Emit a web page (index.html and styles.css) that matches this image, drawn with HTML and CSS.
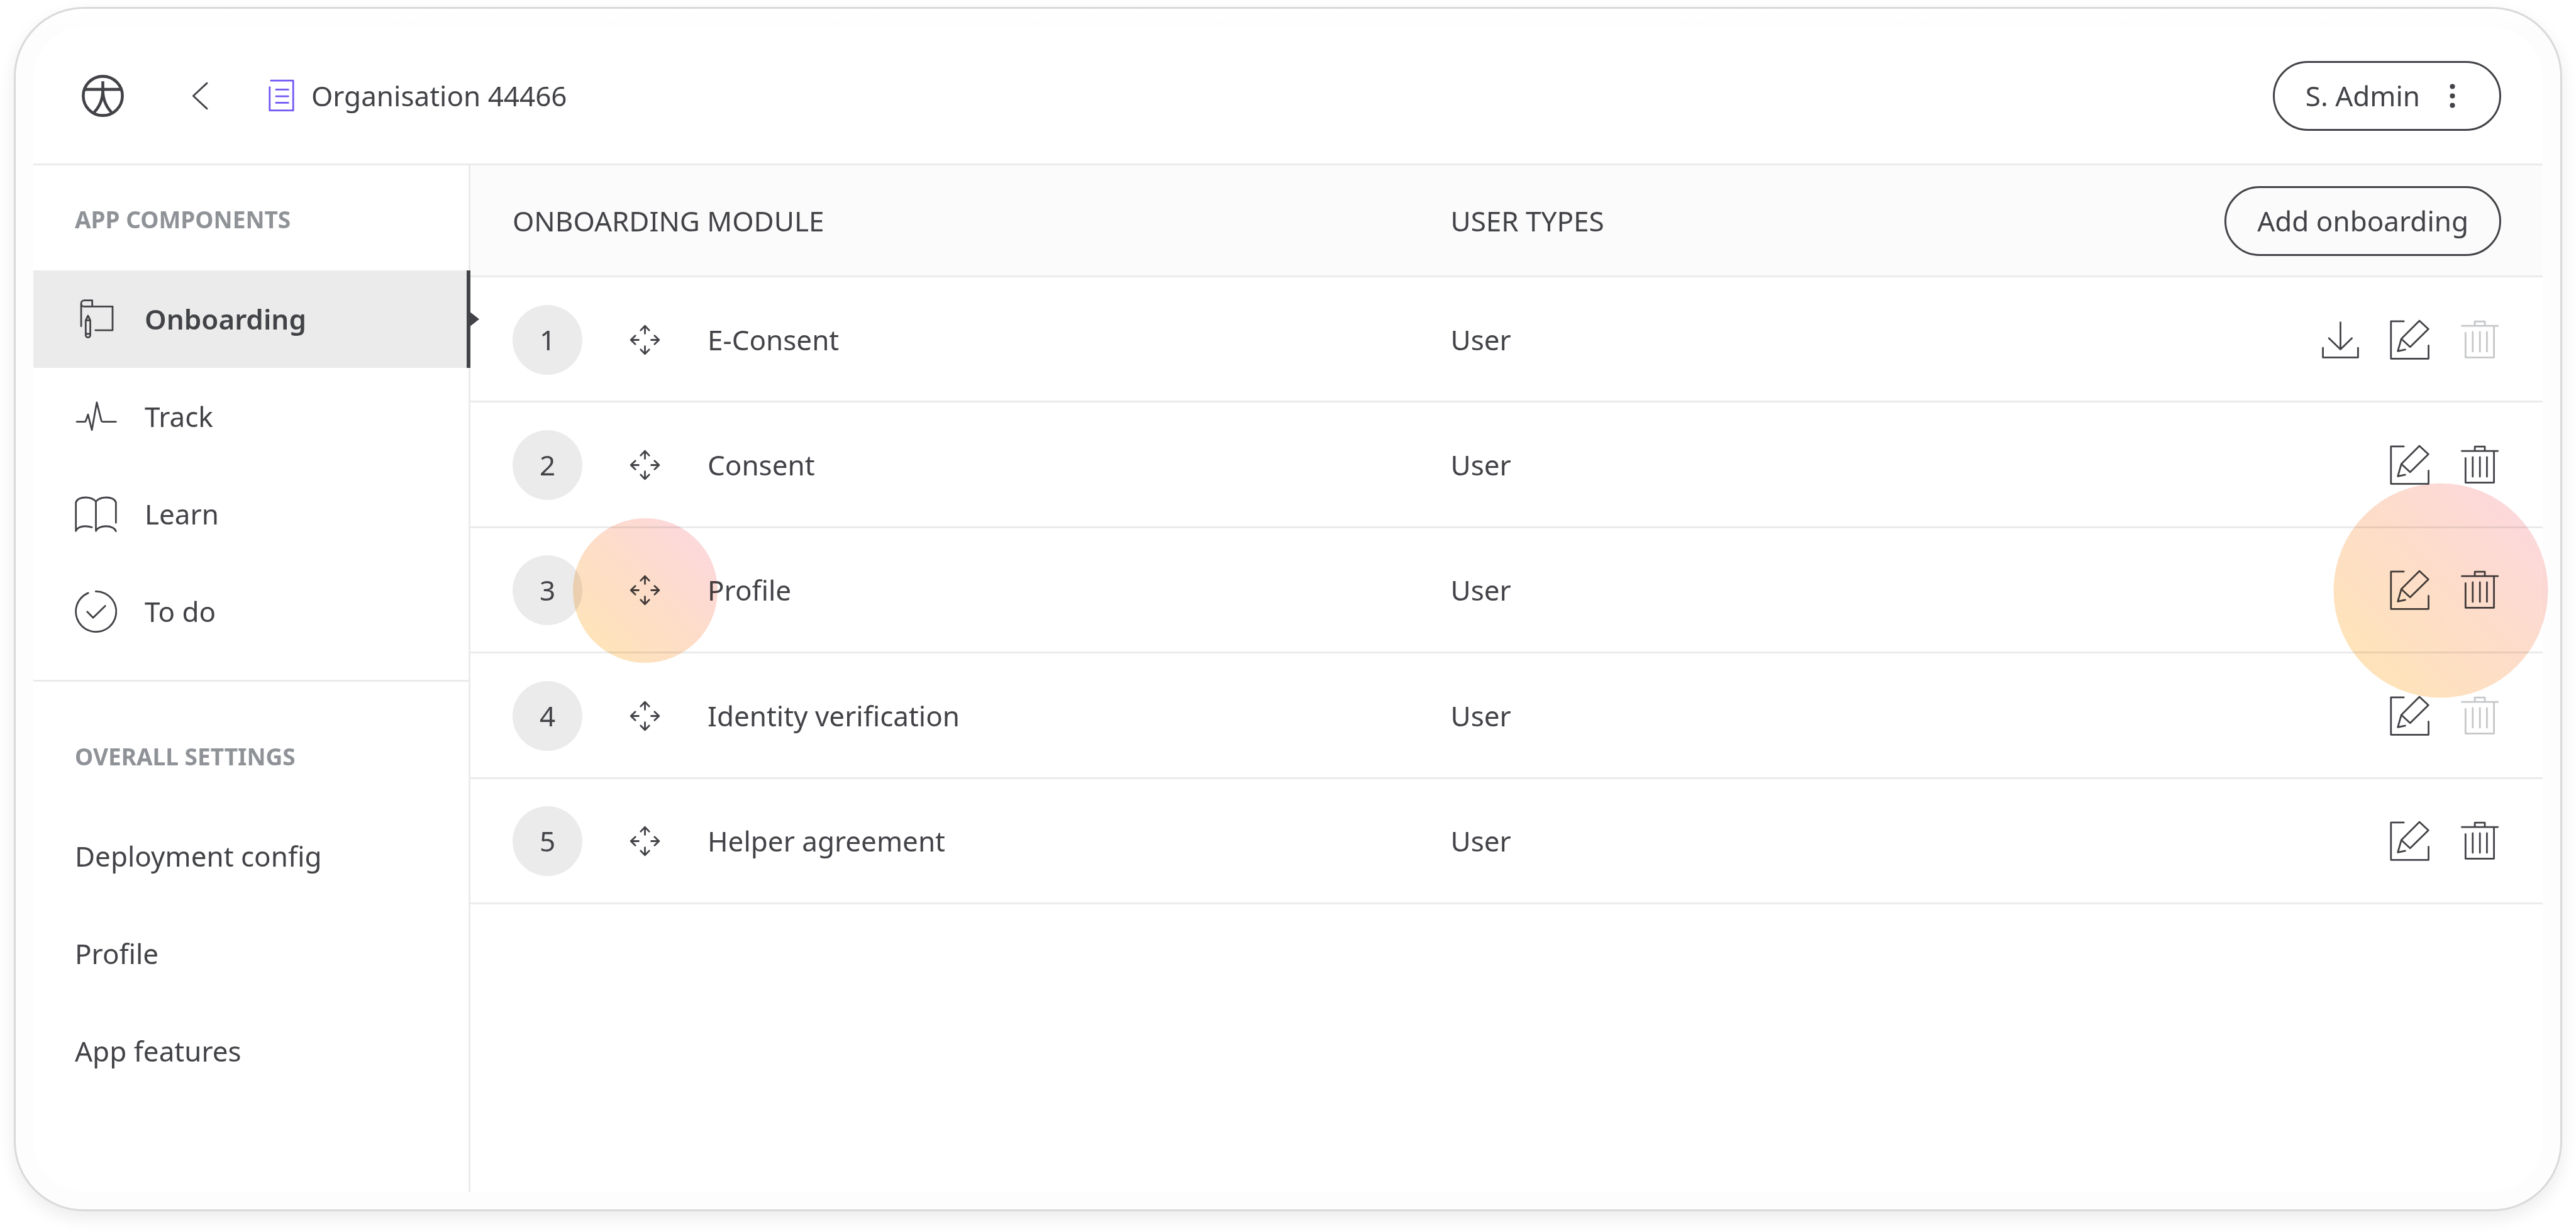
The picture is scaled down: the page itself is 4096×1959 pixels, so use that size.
FILE: index.html
```html
<!DOCTYPE html>
<html lang="en">
<head>
<meta charset="utf-8">
<meta name="viewport" content="width=device-width, initial-scale=1">
<title>Organisation 44466 – Onboarding</title>
<link rel="stylesheet" href="styles.css">
</head>
<body>
<svg class="sprite" aria-hidden="true">
  <symbol id="i-logo" viewBox="0 0 24 24"><g stroke-width="1.65" stroke-linecap="butt"><circle cx="12" cy="12" r="11.15"/><path d="M1.6 8.3h20.8M12 3.7v5.5"/><path d="M12 8.5c0 5.4-1.700 9.500-5 12.900M12 8.500c0 5.400 1.700 9.500 5 12.900"/></g></symbol>
  <symbol id="i-back" viewBox="0 0 24 24"><path d="M15.800 4.700 8 12l7.800 7.300"/></symbol>
  <symbol id="i-doc" viewBox="0 0 24 24"><path d="M6 3.300h12.700v17H5.300V7M8.900 8.400h7M8.900 12.200h7M8.900 15.900h7"/></symbol>
  <symbol id="i-board" viewBox="0 0 24 24"><path d="M3.600 16V3c0-1 .8-1.700 1.800-1.700h4.500v3.500M3.600 3.200c0 1 .8 1.600 1.800 1.600h16.100v13.500H11.700"/><path d="M6.200 12.700 7.500 10l1.300 2.700v8.500a1.300 1.200 0 0 1-2.600 0zM6.200 12.700h2.600M6.200 20.400h2.600"/></symbol>
  <symbol id="i-track" viewBox="0 0 24 24"><path d="M1.100 14.900h4.500c.3 0 .5-.1.600-.4l1.300-3.700 2.200 8.800 2.800-15.700 2.600 10.400c.1.400.3.600.7.600h7.600"/></symbol>
  <symbol id="i-learn" viewBox="0 0 24 24"><path d="M.6 21.600V5.300C1.200 3.600 3.300 2.500 6 2.500s4.800.9 6 2.300c1.200-1.400 3.300-2.300 6-2.300s4.800 1.100 5.400 2.800v11.600M12 4.800v16.800c.6-1.600 3-2.700 5.800-2.700s5.100 1.200 5.600 2.800M.6 21.600c.5-1.600 2.700-2.700 5.300-2.700 1.500 0 2.700.2 3.800.6"/></symbol>
  <symbol id="i-todo" viewBox="0 0 24 24"><path d="M11.900.5A11.500 11.500 0 1 1 7.600 1.400M7.100 12.100l3.300 3.400 6.900-6.700"/></symbol>
  <symbol id="i-dots" viewBox="0 0 24 24"><g fill="currentColor" stroke="none"><circle cx="12" cy="6.600" r="1.450"/><circle cx="12" cy="12" r="1.450"/><circle cx="12" cy="17.400" r="1.450"/></g></symbol>
  <symbol id="i-move" viewBox="0 0 24 24"><path d="M12 4v4.400M9.600 6.500 12 4l2.400 2.500M12 20v-4.400M9.600 17.500 12 20l2.400-2.500M4 12h4.400M6.500 9.600 4 12l2.500 2.400M20 12h-4.400M17.500 9.600 20 12l-2.500 2.400"/></symbol>
  <symbol id="i-download" viewBox="0 0 24 24"><path d="M12 2v15.400M5.400 11l6.600 6.400 6.500-6.400M2 16.500V22h20v-5.500"/></symbol>
  <symbol id="i-edit" viewBox="0 0 24 24"><path d="M8.300 1.400H1v21.300h21.400v-7.500M9.100 17.500l-4.200.9 2-7L17.200 1.100l5.100 4.700-10.400 10.200-5-4.600"/></symbol>
  <symbol id="i-trash" viewBox="0 0 24 24"><path d="M1.600 4h20.500M9 4V1.500h5.700V4M3.700 8v14h16.200V4.200M7.800 7.500v11.100M11.900 7.500v11.100M15.900 7.500v11.100"/></symbol>
</svg>

<div class="frame">
  <div class="app">
    <header class="topbar">
      <a class="logo" href="#" aria-label="Home"><svg class="icon"><use href="#i-logo"/></svg></a>
      <a class="back" href="#" aria-label="Back"><svg class="icon"><use href="#i-back"/></svg></a>
      <a class="crumb" href="#"><svg class="icon crumb-icon"><use href="#i-doc"/></svg>Organisation 44466</a>
      <button class="pill user" type="button">S. Admin<svg class="icon"><use href="#i-dots"/></svg></button>
    </header>

    <div class="body">
      <nav class="sidebar" aria-label="Deployment">
        <section class="group">
          <h2 class="group-title">APP COMPONENTS</h2>
          <a class="item current" href="#" aria-current="page"><svg class="icon"><use href="#i-board"/></svg>Onboarding</a>
          <a class="item" href="#"><svg class="icon"><use href="#i-track"/></svg>Track</a>
          <a class="item" href="#"><svg class="icon"><use href="#i-learn"/></svg>Learn</a>
          <a class="item" href="#"><svg class="icon"><use href="#i-todo"/></svg>To do</a>
        </section>
        <section class="group">
          <h2 class="group-title">OVERALL SETTINGS</h2>
          <a class="item" href="#">Deployment config</a>
          <a class="item" href="#">Profile</a>
          <a class="item" href="#">App features</a>
        </section>
      </nav>

      <main class="main">
        <table class="modules">
          <thead>
            <tr>
              <th class="col-module" scope="col">ONBOARDING MODULE</th>
              <th class="col-user" scope="col">USER TYPES</th>
              <th class="col-actions"><button class="pill" type="button">Add onboarding</button></th>
            </tr>
          </thead>
          <tbody>
            <tr>
              <td><div class="module"><span class="order">1</span><button class="tool" type="button" aria-label="Move E-Consent"><svg class="icon"><use href="#i-move"/></svg></button>E-Consent</div></td>
              <td>User</td>
              <td><div class="actions">
                <button class="tool" type="button" aria-label="Download"><svg class="icon"><use href="#i-download"/></svg></button>
                <button class="tool" type="button" aria-label="Edit"><svg class="icon"><use href="#i-edit"/></svg></button>
                <button class="tool" type="button" aria-label="Delete" disabled><svg class="icon"><use href="#i-trash"/></svg></button>
              </div></td>
            </tr>
            <tr>
              <td><div class="module"><span class="order">2</span><button class="tool" type="button" aria-label="Move Consent"><svg class="icon"><use href="#i-move"/></svg></button>Consent</div></td>
              <td>User</td>
              <td><div class="actions">
                <button class="tool" type="button" aria-label="Edit"><svg class="icon"><use href="#i-edit"/></svg></button>
                <button class="tool" type="button" aria-label="Delete"><svg class="icon"><use href="#i-trash"/></svg></button>
              </div></td>
            </tr>
            <tr>
              <td><div class="module"><span class="order">3</span><span class="spot spot-small"><button class="tool" type="button" aria-label="Move Profile"><svg class="icon"><use href="#i-move"/></svg></button></span>Profile</div></td>
              <td>User</td>
              <td><div class="actions"><span class="spot spot-large">
                <button class="tool" type="button" aria-label="Edit"><svg class="icon"><use href="#i-edit"/></svg></button>
                <button class="tool" type="button" aria-label="Delete"><svg class="icon"><use href="#i-trash"/></svg></button>
              </span></div></td>
            </tr>
            <tr>
              <td><div class="module"><span class="order">4</span><button class="tool" type="button" aria-label="Move Identity verification"><svg class="icon"><use href="#i-move"/></svg></button>Identity verification</div></td>
              <td>User</td>
              <td><div class="actions">
                <button class="tool" type="button" aria-label="Edit"><svg class="icon"><use href="#i-edit"/></svg></button>
                <button class="tool" type="button" aria-label="Delete" disabled><svg class="icon"><use href="#i-trash"/></svg></button>
              </div></td>
            </tr>
            <tr>
              <td><div class="module"><span class="order">5</span><button class="tool" type="button" aria-label="Move Helper agreement"><svg class="icon"><use href="#i-move"/></svg></button>Helper agreement</div></td>
              <td>User</td>
              <td><div class="actions">
                <button class="tool" type="button" aria-label="Edit"><svg class="icon"><use href="#i-edit"/></svg></button>
                <button class="tool" type="button" aria-label="Delete"><svg class="icon"><use href="#i-trash"/></svg></button>
              </div></td>
            </tr>
          </tbody>
        </table>
      </main>
    </div>
  </div>
</div>
</body>
</html>
```
FILE: styles.css
```css
:root {
  --ink: #424347;
  --line: #ebebeb;
  --muted: #8f9297;
  --accent: #7258f4;
}

* {
  box-sizing: border-box;
}

body {
  display: flex;
  min-height: 100vh;
  margin: 0;
  padding: 11px 22px 33px;
  background: #fff;
  color: var(--ink);
  font: 400 44px/59px "Noto Sans", sans-serif;
}

a {
  color: inherit;
  text-decoration: none;
}

button {
  padding: 0;
  border: 0;
  background: none;
  color: inherit;
  font: inherit;
  cursor: pointer;
}

.sprite {
  position: absolute;
  width: 0;
  height: 0;
}

.icon {
  display: block;
  flex: none;
  width: 67px;
  height: 67px;
  fill: none;
  stroke: currentColor;
  stroke-width: 1;
  stroke-linecap: round;
  stroke-linejoin: round;
}

/* Window frame */
.frame {
  display: flex;
  flex: 1;
  min-width: 0;
  padding: 28px;
  border: 3px solid #d8d9db;
  border-radius: 111px;
  background: linear-gradient(#fff, #fdfdfd 28px, #fdfdfd);
  box-shadow: 0 11px 28px rgba(0, 0, 0, 0.08);
}

.app {
  display: flex;
  flex: 1;
  flex-direction: column;
  min-width: 0;
  border-radius: 83px;
  background: #fff;
}

.topbar {
  display: flex;
  align-items: center;
  height: 221px;
  padding: 2px 66px 0 77px;
  border-bottom: 3px solid var(--line);
}

.back {
  margin-left: 88px;
}

.crumb {
  display: flex;
  align-items: center;
  gap: 14px;
  margin-left: 62px;
}

.crumb-icon {
  color: var(--accent);
}

.pill {
  display: inline-flex;
  align-items: center;
  height: 111px;
  padding: 0 49px;
  border: 3px solid var(--ink);
  border-radius: 56px;
  white-space: nowrap;
}

.user {
  gap: 18px;
  margin-left: auto;
  padding-right: 41px;
}

.body {
  display: flex;
  flex: 1;
}

/* Sidebar */
.sidebar {
  flex: none;
  width: 695px;
  border-right: 3px solid var(--line);
}

.group + .group {
  margin-top: 31px;
  padding-top: 33px;
  border-top: 3px solid var(--line);
}

.group-title {
  margin: 0;
  padding: 62px 66px 57px;
  color: var(--muted);
  font-size: 37px;
  font-weight: 700;
  line-height: 48px;
}

.item {
  display: flex;
  position: relative;
  align-items: center;
  gap: 44px;
  height: 155px;
  padding: 0 66px;
}

.current {
  background: var(--line);
  font-weight: 600;
}

.current::before {
  position: absolute;
  top: 0;
  right: -3px;
  bottom: 0;
  width: 6px;
  background: var(--ink);
  content: "";
}

.current::after {
  position: absolute;
  top: 50%;
  right: -17px;
  width: 14px;
  height: 22px;
  background: var(--ink);
  clip-path: polygon(0 0, 100% 50%, 0 100%);
  content: "";
  transform: translateY(-50%);
}

/* Module table */
.main {
  flex: 1;
  min-width: 0;
}

.modules {
  width: 100%;
  height: 1175px;
  border-spacing: 0;
  table-layout: fixed;
}

.modules th,
.modules td {
  padding: 2px 0 0;
  border-bottom: 3px solid var(--line);
  font-weight: 400;
  text-align: left;
}

.modules th {
  height: 178px;
  background: #fbfbfb;
}

.modules td {
  height: 199px;
}

.modules th:first-child,
.modules td:first-child {
  padding-left: 67px;
}

.modules th:last-child,
.modules td:last-child {
  padding-right: 66px;
  text-align: right;
}

.modules .pill {
  vertical-align: middle;
}

.col-module {
  width: 47.3%;
}

.col-user {
  width: 26%;
}

.module {
  display: flex;
  align-items: center;
  gap: 66px;
}

.order {
  display: flex;
  align-items: center;
  justify-content: center;
  width: 111px;
  height: 111px;
  border-radius: 50%;
  background: var(--line);
}

.actions,
.spot {
  display: flex;
  justify-content: flex-end;
  gap: 44px;
}

.tool:disabled {
  color: #c6c7c9;
  cursor: default;
}

/* Round tinted marker laid over a group of tools */
.spot {
  position: relative;
}

.spot::after {
  position: absolute;
  top: 50%;
  left: 50%;
  width: 230px;
  height: 230px;
  border-radius: 50%;
  background: linear-gradient(45deg, #fee4b8 10%, #fdddc8 50%, #fcd8dd 90%);
  content: "";
  mix-blend-mode: multiply;
  pointer-events: none;
  transform: translate(-50%, -50%);
}

.spot-large::after {
  left: 46%;
  width: 341px;
  height: 341px;
}
```
